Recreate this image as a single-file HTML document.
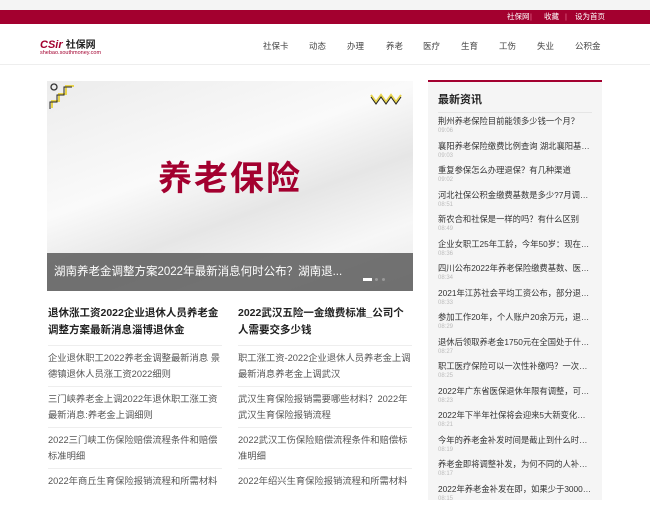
<!DOCTYPE html>
<html><head><meta charset="utf-8"><style>
*{margin:0;padding:0;box-sizing:border-box}
body{width:650px;height:500px;overflow:hidden;background:#fff;font-family:"Liberation Sans","Noto Sans CJK SC",sans-serif;position:relative}
.top{position:absolute;left:0;top:0;width:650px;height:10px;background:#f4f4f4}
.red{position:absolute;left:0;top:10px;width:650px;height:14px;background:#a3002f;color:#fff;font-size:7.5px;line-height:14px}
.red span{position:absolute;top:0}
.hdr{position:absolute;top:24px;left:0;width:650px;height:41px;border-bottom:1px solid #eee}
.nav{position:absolute;top:40px;font-size:8.5px;color:#444}
.slide{position:absolute;left:47px;top:81px;width:366px;height:210px;background:linear-gradient(160deg,#ececec,#fafafa 40%,#e6e6e6 60%,#f7f7f7 80%,#e9e9e9);overflow:hidden}
.big{position:absolute;left:0;width:366px;top:70px;text-align:center;font-size:34px;font-weight:bold;color:#a3002f;letter-spacing:2px}
.cap{position:absolute;left:0;bottom:0;width:366px;height:38px;background:rgba(90,90,90,.85);color:#fff;font-size:11.5px;line-height:38px;padding-left:7px}
.side{position:absolute;left:428px;top:80px;width:174px;height:420px;background:#f5f5f5;border-top:2px solid #a3002f;padding:0 10px}
.side h3{font-size:11px;color:#222;margin-top:9px;padding-bottom:5px;border-bottom:1px solid #e5e5e5}
.it{height:24.5px;padding-top:3px}
.it p{font-size:8.3px;color:#333;white-space:nowrap;overflow:hidden;text-overflow:ellipsis;line-height:11px}
.it i{display:block;font-style:normal;font-size:6px;color:#bbb;line-height:8px}
.col{position:absolute;top:305px;width:174px}
.col h4{font-size:10.5px;line-height:17px;color:#222;font-weight:bold;padding-bottom:6px;border-bottom:1px solid #eee}
.col div{font-size:9.3px;line-height:16px;color:#555;padding:4px 0 4px;border-bottom:1px solid #eee}
</style></head><body>
<div class="top"></div>
<div class="red"><span style="left:507px">社保网</span><span style="left:530px;color:#e79">|</span><span style="left:544px">收藏</span><span style="left:565px;color:#e79">|</span><span style="left:575px">设为首页</span></div>
<div class="hdr">
<div style="position:absolute;left:40px;top:12px;font-size:11px;font-weight:bold;color:#a3002f;font-style:italic">CSir <span style="color:#222;font-style:normal;font-size:10px">社保网</span></div>
<div style="position:absolute;left:40px;top:26px;font-size:5.5px;color:#a3002f">shebao.southmoney.com</div>
</div>
<span class="nav" style="left:263px">社保卡</span><span class="nav" style="left:309px">动态</span><span class="nav" style="left:347px">办理</span><span class="nav" style="left:386px">养老</span><span class="nav" style="left:423px">医疗</span><span class="nav" style="left:461px">生育</span><span class="nav" style="left:499px">工伤</span><span class="nav" style="left:537px">失业</span><span class="nav" style="left:575px">公积金</span>
<div class="slide">
<svg style="position:absolute;left:2px;top:1px" width="30" height="30"><circle cx="5" cy="5" r="3" fill="none" stroke="#333" stroke-width="1.3"/><path d="M3 26V19h7v-7h7V4h8" fill="none" stroke="#e8d44d" stroke-width="2"/><path d="M1 27V20h7v-7h7V5h8" fill="none" stroke="#222" stroke-width="1"/></svg>
<svg style="position:absolute;left:323px;top:12px" width="36" height="12"><path d="M1 2l5 7 5-7 5 7 5-7 5 7 5-7" fill="none" stroke="#e8d44d" stroke-width="2"/><path d="M1 4l5 7 5-7 5 7 5-7 5 7 5-7" fill="none" stroke="#222" stroke-width="1"/></svg>
<div class="big">养老保险</div>
<div class="cap">湖南养老金调整方案2022年最新消息何时公布？湖南退...</div>
<div style="position:absolute;left:316px;top:197px;width:9px;height:3px;background:#fff"></div>
<div style="position:absolute;left:328px;top:197px;width:3px;height:3px;background:#999;border-radius:2px"></div>
<div style="position:absolute;left:335px;top:197px;width:3px;height:3px;background:#999;border-radius:2px"></div>
</div>
<div class="side"><h3>最新资讯</h3>
<div class="it"><p>荆州养老保险目前能领多少钱一个月？</p><i>09:06</i></div>
<div class="it"><p>襄阳养老保险缴费比例查询 湖北襄阳基础养老金</p><i>09:03</i></div>
<div class="it"><p>重复参保怎么办理退保？有几种渠道</p><i>09:02</i></div>
<div class="it"><p>河北社保公积金缴费基数是多少?7月调整情况</p><i>08:51</i></div>
<div class="it"><p>新农合和社保是一样的吗？有什么区别</p><i>08:49</i></div>
<div class="it"><p>企业女职工25年工龄，今年50岁：现在退休能拿多少</p><i>08:36</i></div>
<div class="it"><p>四川公布2022年养老保险缴费基数、医保缴费基数</p><i>08:34</i></div>
<div class="it"><p>2021年江苏社会平均工资公布，部分退休人员</p><i>08:33</i></div>
<div class="it"><p>参加工作20年，个人账户20余万元，退休能领多少</p><i>08:29</i></div>
<div class="it"><p>退休后领取养老金1750元在全国处于什么水平</p><i>08:27</i></div>
<div class="it"><p>职工医疗保险可以一次性补缴吗？一次性补缴</p><i>08:25</i></div>
<div class="it"><p>2022年广东省医保退休年限有调整，可能影响</p><i>08:23</i></div>
<div class="it"><p>2022年下半年社保将会迎来5大新变化，早知道</p><i>08:21</i></div>
<div class="it"><p>今年的养老金补发时间是截止到什么时间？</p><i>08:19</i></div>
<div class="it"><p>养老金即将调整补发，为何不同的人补发金额不同</p><i>08:17</i></div>
<div class="it"><p>2022年养老金补发在即，如果少于3000元的</p><i>08:15</i></div>
</div>
<div class="col" style="left:48px"><h4>退休涨工资2022企业退休人员养老金调整方案最新消息淄博退休金</h4>
<div>企业退休职工2022养老金调整最新消息 景德镇退休人员涨工资2022细则</div>
<div>三门峡养老金上调2022年退休职工涨工资最新消息:养老金上调细则</div>
<div>2022三门峡工伤保险赔偿流程条件和赔偿标准明细</div>
<div style="border:0">2022年商丘生育保险报销流程和所需材料</div></div>
<div class="col" style="left:238px"><h4>2022武汉五险一金缴费标准_公司个人需要交多少钱</h4>
<div>职工涨工资-2022企业退休人员养老金上调最新消息养老金上调武汉</div>
<div>武汉生育保险报销需要哪些材料？2022年武汉生育保险报销流程</div>
<div>2022武汉工伤保险赔偿流程条件和赔偿标准明细</div>
<div style="border:0">2022年绍兴生育保险报销流程和所需材料</div></div>
</body></html>
